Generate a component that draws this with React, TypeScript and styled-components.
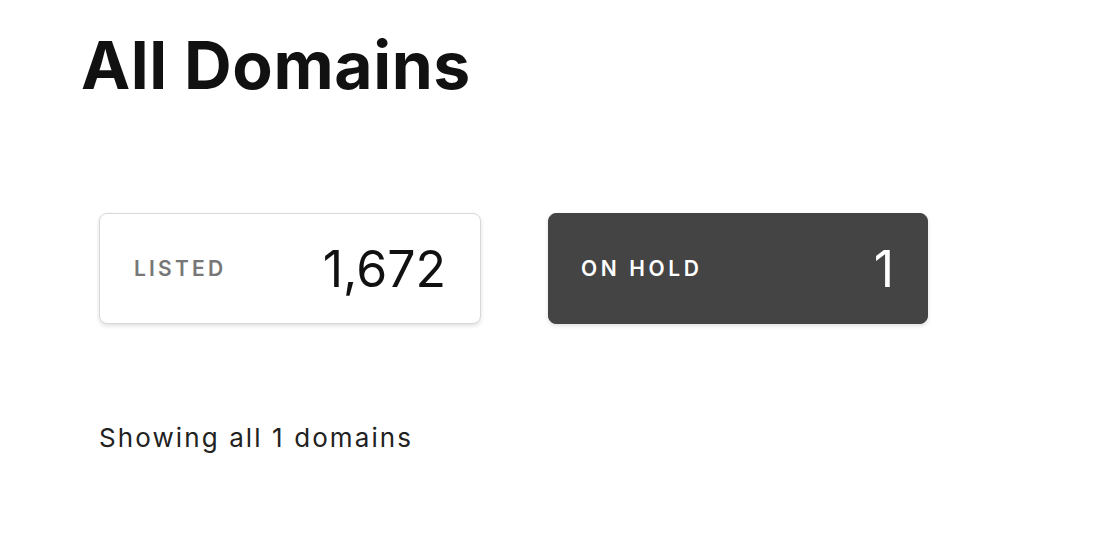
import styled, { createGlobalStyle } from 'styled-components'

const GlobalStyle = createGlobalStyle`
  html, body {
    margin: 0;
    padding: 0;
    background: #fff;
    font-family: Inter, "Noto Sans", sans-serif;
    color: #111;
  }
`

const Page = styled.main`
  padding: 20px 0 0 81px;
`

const Title = styled.h1`
  margin: 0;
  font-size: 66px;
  font-weight: 700;
  letter-spacing: 0.6px;
  line-height: 90px;
  color: #111;
`

const Cards = styled.div`
  display: flex;
  gap: 67px;
  margin: 103px 0 0 18px;
`

const Card = styled.div<{ $dark?: boolean }>`
  box-sizing: border-box;
  width: ${p => (p.$dark ? 380 : 382)}px;
  height: 111px;
  display: flex;
  align-items: center;
  justify-content: space-between;
  padding: 0 ${p => (p.$dark ? 33 : 34)}px 0 ${p => (p.$dark ? 32 : 34)}px;
  border-radius: 8px;
  background: ${p => (p.$dark ? '#444' : '#fff')};
  border: 1px solid ${p => (p.$dark ? '#444' : '#d8d8d8')};
  box-shadow: 0 2px 4px rgba(0, 0, 0, 0.12);
  color: ${p => (p.$dark ? '#fff' : '#111')};
`

const Label = styled.span<{ $dark?: boolean }>`
  font-size: 21px;
  font-weight: 600;
  letter-spacing: ${p => (p.$dark ? 3.6 : 3.2)}px;
  color: ${p => (p.$dark ? '#fff' : '#777')};
`

const Count = styled.span`
  font-size: 50px;
  font-weight: 400;
`

const Summary = styled.p`
  margin: 98px 0 0 18px;
  font-size: 26px;
  letter-spacing: 2.1px;
  color: #222;
`

export default function App() {
  return (
    <>
      <GlobalStyle />
      <Page>
        <Title>All Domains</Title>
        <Cards>
          <Card>
            <Label>LISTED</Label>
            <Count>1,672</Count>
          </Card>
          <Card $dark>
            <Label $dark>ON HOLD</Label>
            <Count>1</Count>
          </Card>
        </Cards>
        <Summary>Showing all 1 domains</Summary>
      </Page>
    </>
  )
}
